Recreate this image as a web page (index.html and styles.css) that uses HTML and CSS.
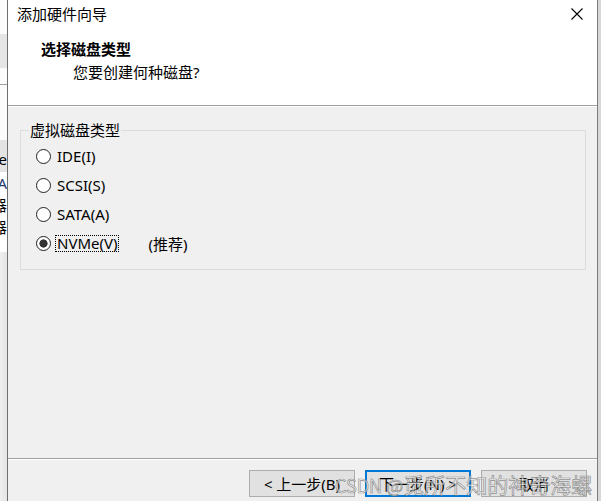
FILE: index.html
```html
<!DOCTYPE html>
<html lang="zh-CN">
<head>
    <meta charset="UTF-8">
    <title>添加硬件向导</title>
    <link rel="stylesheet" href="styles.css">
</head>
<body>

<div class="screen">
    <div class="behind">
        <div class="bh-row bh-a"></div>
        <div class="bh-row bh-b"></div>
        <div class="bh-row bh-c"></div>
        <div class="bh-row bh-d"></div>
        <div class="bh-row bh-e"><span>Type</span></div>
        <div class="bh-row bh-f">
            <span class="navy">SA</span>
            <span>器</span>
            <span>器</span>
        </div>
        <div class="bh-row bh-g"></div>
    </div>

    <div class="dialog">
        <div class="top">
            <div class="titlebar">
                <span class="title">添加硬件向导</span>
                <svg class="close" width="12" height="12" viewBox="0 0 12 12">
                    <path d="M0.5 0.5 L11.5 11.5 M11.5 0.5 L0.5 11.5" stroke="#000" stroke-width="1.1" fill="none"/>
                </svg>
            </div>
            <div class="heading">选择磁盘类型</div>
            <div class="subheading">您要创建何种磁盘?</div>
        </div>

        <div class="content">
            <fieldset class="group">
                <legend>虚拟磁盘类型</legend>
                <label class="option"><input type="radio" name="disk"><span class="opt-text">IDE(I)</span></label>
                <label class="option"><input type="radio" name="disk"><span class="opt-text">SCSI(S)</span></label>
                <label class="option"><input type="radio" name="disk"><span class="opt-text">SATA(A)</span></label>
                <label class="option"><input type="radio" name="disk" checked><span class="opt-text focus">NVMe(V)</span><span class="hint">(推荐)</span></label>
            </fieldset>
        </div>

        <div class="footer">
            <button>&lt; 上一步(B)</button>
            <button class="default">下一步(N) &gt;</button>
            <button>取消</button>
            <div class="watermark"><span class="wm-latin">CSDN @</span>觅所不知的神奇海螺</div>
        </div>
    </div>

    <div class="behind-right"></div>
</div>

</body>
</html>
```

FILE: styles.css
```css
body {
    margin: 0;
    font-family: "Noto Sans", "Noto Sans CJK SC", sans-serif;
    font-size: 15px;
    color: #000;
    background-color: #f0f0f0;
}

.screen {
    display: flex;
    width: 601px;
    height: 501px;
    overflow: hidden;
}

/* window behind the dialog */
.behind {
    width: 7px;
    display: flex;
    flex-direction: column;
    overflow: hidden;
    background-color: #f0f0f0;
}

.bh-row {
    display: flex;
    flex-direction: column;
    align-items: flex-end;
    line-height: 22px;
    white-space: nowrap;
}

.bh-a { height: 34px; background-color: #fbfbfb; }
.bh-b { height: 34px; background-color: #e5e5e5; }
.bh-c { height: 16px; background-color: #fbfbfb; border-bottom: 1px solid #a0a0a0; }
.bh-d { height: 55px; background-color: #fbfbfb; }
.bh-e { height: 32px; background-color: #e3e3e3; padding-top: 9px; box-sizing: border-box; line-height: 20px; }
.bh-f { height: 80px; background-color: #fff; }
.bh-g { flex: 1; background: linear-gradient(to right, #f0f0f0, #e4e4e4); }

.navy {
    color: #1f3a6e;
}

.behind-right {
    flex: 1;
    background-color: #d8d8d8;
}

/* dialog */
.dialog {
    width: 589px;
    display: flex;
    flex-direction: column;
    border-left: 1px solid #6f6f6f;
    border-right: 1px solid #7c7c7c;
    background-color: #f0f0f0;
}

.top {
    height: 105px;
    background-color: #fff;
    border-bottom: 1px solid #a0a0a0;
}

.titlebar {
    height: 28px;
    display: flex;
    align-items: center;
    justify-content: space-between;
    padding: 0 14px 0 9px;
}

.title {
    line-height: 20px;
}

.heading {
    font-weight: bold;
    line-height: 23px;
    padding: 10px 0 0 33px;
}

.subheading {
    line-height: 23px;
    padding-left: 65px;
}

.content {
    flex: 1;
    box-shadow: inset 0 1px 0 #fff;
}

.group {
    margin: 14px 11px 0 12px;
    padding: 2px 0 11px 15px;
    border: 1px solid #dcdcdc;
}

.group legend {
    padding: 0 1px;
    margin-left: -7px;
    line-height: 20px;
}

.option {
    display: flex;
    align-items: center;
    height: 29px;
}

.option input {
    appearance: none;
    flex: none;
    box-sizing: border-box;
    width: 15px;
    height: 15px;
    margin: 0 4px 0 0;
    border: 1px solid #222;
    border-radius: 50%;
    background-color: #fff;
}

.option input:checked {
    background: radial-gradient(circle, #333 0 3.8px, #fff 4.4px);
}

.opt-text {
    line-height: 15px;
    padding: 0 1px;
    border: 1px dotted transparent;
}

.opt-text.focus {
    border-color: #000;
}

.hint {
    margin-left: 29px;
}

/* footer */
.footer {
    position: relative;
    height: 43px;
    box-sizing: border-box;
    display: flex;
    justify-content: flex-end;
    align-items: flex-start;
    padding: 11px 10px 0 0;
    border-top: 1px solid #a0a0a0;
    box-shadow: inset 0 1px 0 #fff;
}

button {
    width: 106px;
    height: 27px;
    margin-left: 10px;
    padding: 0;
    font-family: inherit;
    font-size: 15px;
    color: #000;
    background-color: #e1e1e1;
    border: 1px solid #adadad;
}

button.default {
    border: 2px solid #0078d7;
}

.watermark {
    position: absolute;
    left: 327px;
    top: 13px;
    font-family: "Noto Sans CJK SC", sans-serif;
    font-size: 21px;
    line-height: 24px;
    white-space: nowrap;
    color: rgba(255, 255, 255, 0.6);
    -webkit-text-stroke: 0.7px rgba(110, 110, 110, 0.75);
    pointer-events: none;
}

.wm-latin {
    font-size: 18px;
}
```
